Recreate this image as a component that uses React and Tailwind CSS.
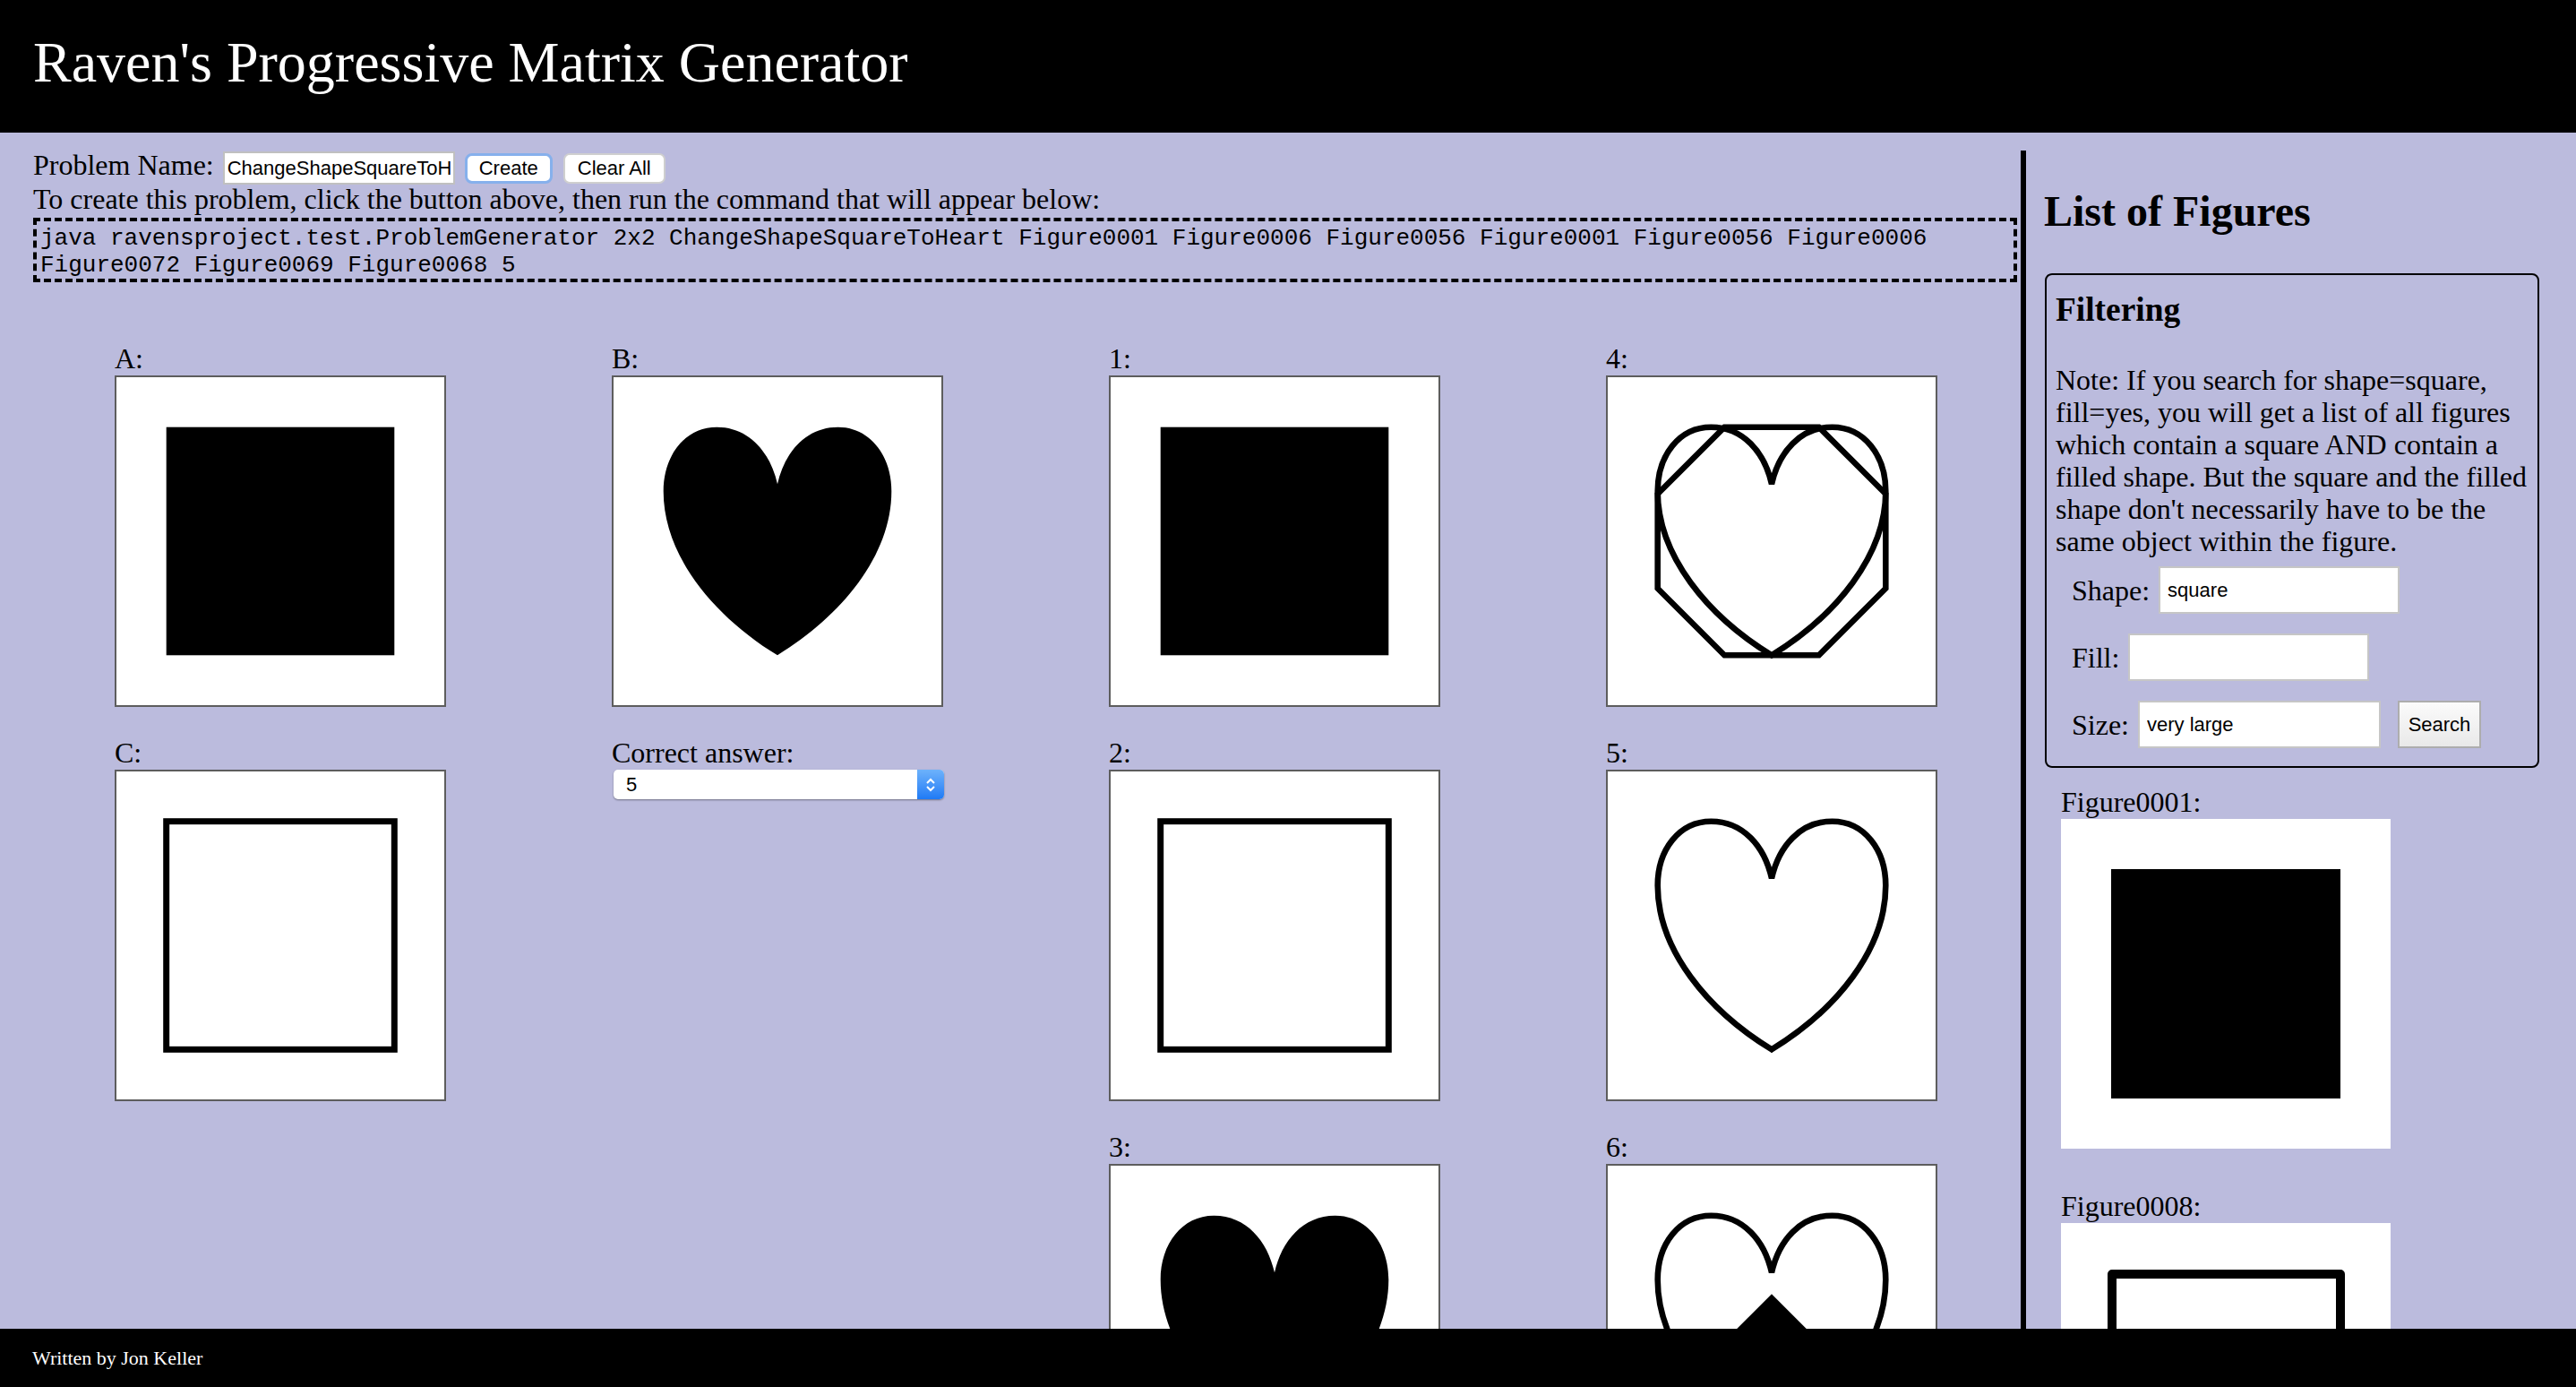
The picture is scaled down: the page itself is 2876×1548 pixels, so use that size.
import React from 'react';

const SANS = "font-['Liberation_Sans',Arial,sans-serif]";
const MONO = "font-['Liberation_Mono','Courier_New',monospace]";

// Heart outline used by several matrix cells (184x184 figure space)
const HEART =
  'M92 60C88 42 76 28 58 28C40 28 28 44 28 64C28 100 56 134 92 156C128 134 156 100 156 64C156 44 144 28 126 28C108 28 96 42 92 60Z';

function Shape({ kind }) {
  switch (kind) {
    case 'squareFilled':
      return <rect x="28" y="28" width="128" height="128" fill="black" />;
    case 'squareOutline':
      return <rect x="28" y="28" width="128" height="128" fill="none" stroke="black" strokeWidth="3.5" />;
    case 'squareThick':
      return (
        <rect x="28.5" y="28.5" width="127.5" height="127.5" fill="none" stroke="black" strokeWidth="5" strokeLinejoin="round" />
      );
    case 'heartFilled':
      return <path d={HEART} fill="black" />;
    case 'heartOutline':
      return <path d={HEART} fill="none" stroke="black" strokeWidth="3.3" />;
    case 'heartOctagon':
      return (
        <>
          <polygon
            points="65.5,28 118.5,28 156,65.5 156,118.5 118.5,156 65.5,156 28,118.5 28,65.5"
            fill="none"
            stroke="black"
            strokeWidth="3.3"
          />
          <path d={HEART} fill="none" stroke="black" strokeWidth="3.3" />
        </>
      );
    case 'heartTriangle':
      return (
        <>
          <path d={HEART} fill="none" stroke="black" strokeWidth="3.3" />
          <polygon points="92,72 52,112 132,112" fill="black" />
        </>
      );
    default:
      return null;
  }
}

function Figure({ kind }) {
  return (
    <svg viewBox="0 0 184 184" className="block h-full w-full">
      <Shape kind={kind} />
    </svg>
  );
}

const cells = [
  { label: 'A:', kind: 'squareFilled' },
  { label: 'B:', kind: 'heartFilled' },
  { label: '1:', kind: 'squareFilled' },
  { label: '4:', kind: 'heartOctagon' },
  { label: 'C:', kind: 'squareOutline' },
  { label: 'Correct answer:', select: true },
  { label: '2:', kind: 'squareOutline' },
  { label: '5:', kind: 'heartOutline' },
  { empty: true },
  { empty: true },
  { label: '3:', kind: 'heartFilled' },
  { label: '6:', kind: 'heartTriangle' },
];

const figureList = [
  { name: 'Figure0001', kind: 'squareFilled' },
  { name: 'Figure0008', kind: 'squareThick' },
];

function AnswerSelect() {
  return (
    <div className="ml-[2px] flex h-[33px] w-[369px] items-center rounded-[5px] bg-white shadow-[0_1px_2px_rgba(0,0,0,0.4)]">
      <span className={`flex-1 pl-[14px] text-[22px] leading-none ${SANS}`}>5</span>
      <div className="flex h-full w-[30px] items-center justify-center rounded-r-[5px] bg-linear-to-b from-[#6db2fb] to-[#1e7af5]">
        <svg width="14" height="22" viewBox="0 0 14 22">
          <path d="M3 9 L7 5 L11 9" fill="none" stroke="white" strokeWidth="2" />
          <path d="M3 13 L7 17 L11 13" fill="none" stroke="white" strokeWidth="2" />
        </svg>
      </div>
    </div>
  );
}

export default function App() {
  return (
    <div className="flex h-screen flex-col overflow-hidden bg-[#bbbbdd] font-['Liberation_Serif','Times_New_Roman',serif] text-[32px] text-black">
      {/* Header */}
      <header className="h-[148px] shrink-0 bg-black pl-[37px] pt-[38px]">
        <h1 className="text-[64px] font-normal leading-[64px] text-white">Raven's Progressive Matrix Generator</h1>
      </header>

      <div className="flex min-h-0 flex-1 overflow-hidden">
        {/* Problem editor */}
        <div className="w-[2256px] shrink-0 pl-[37px] pr-[4px] pt-[18px]">
          <div className="flex items-baseline leading-[37px]">
            <span>Problem Name:</span>
            <input
              readOnly
              defaultValue="ChangeShapeSquareToHeart"
              className={`ml-[10px] h-[37px] w-[259px] border-2 border-[#c0c0c0] bg-white px-[3px] text-[22px] outline-none ${SANS}`}
            />
            <button
              className={`ml-[11px] h-[34px] rounded-[8px] border-[3px] border-[#86b0ec] bg-white px-[13px] text-[22px] leading-[26px] ${SANS}`}
            >
              Create
            </button>
            <button
              className={`ml-[12px] h-[34px] rounded-[7px] border-2 border-[#cfcfcf] bg-white px-[14px] text-[22px] leading-[26px] ${SANS}`}
            >
              Clear All
            </button>
          </div>
          <p className="-mt-[2px] leading-[37px]">
            To create this problem, click the button above, then run the command that will appear below:
          </p>
          <div className={`mt-[2px] border-4 border-dashed border-black px-[4px] pt-[4px] text-[26px] leading-[30px] ${MONO}`}>
            java ravensproject.test.ProblemGenerator 2x2 ChangeShapeSquareToHeart Figure0001 Figure0006 Figure0056
            Figure0001 Figure0056 Figure0006 Figure0072 Figure0069 Figure0068 5
          </div>

          {/* Matrix + answer options */}
          <div className="ml-[91px] mt-[66px] grid grid-cols-[repeat(4,370px)] gap-x-[185px] gap-y-[32px]">
            {cells.map((c, i) =>
              c.empty ? (
                <div key={i} />
              ) : (
                <div key={i}>
                  <div className="leading-[38px]">{c.label}</div>
                  {c.select ? (
                    <AnswerSelect />
                  ) : (
                    <div className="h-[370px] w-[370px] border-2 border-[#5d5d5d] bg-white">
                      <Figure kind={c.kind} />
                    </div>
                  )}
                </div>
              )
            )}
          </div>
        </div>

        {/* List of figures */}
        <div className="mt-[20px] flex-1 border-l-[6px] border-black pl-[20px]">
          <h2 className="mt-[40px] text-[48px] font-bold leading-[55px]">List of Figures</h2>

          <div className="ml-[1px] mt-[42px] w-[552px] rounded-[8px] border-2 border-black px-[10px] pb-[20px] pt-[17px]">
            <h3 className="text-[37.4px] font-bold leading-[43px]">Filtering</h3>
            <p className="mt-[39px] leading-[36px]">
              Note: If you search for shape=square, fill=yes, you will get a list of all figures which contain a square AND
              contain a filled shape. But the square and the filled shape don't necessarily have to be the same object
              within the figure.
            </p>
            <div className="mt-[10px] flex flex-col gap-[22px] pl-[18px]">
              <div className="flex h-[53px] items-center gap-[10px]">
                <span>Shape:</span>
                <input
                  readOnly
                  defaultValue="square"
                  className={`h-[53px] w-[269px] border-2 border-[#c6c6c6] bg-white px-[8px] text-[22px] outline-none ${SANS}`}
                />
              </div>
              <div className="flex h-[53px] items-center gap-[10px]">
                <span>Fill:</span>
                <input
                  readOnly
                  defaultValue=""
                  className={`h-[53px] w-[269px] border-2 border-[#c6c6c6] bg-white px-[8px] text-[22px] outline-none ${SANS}`}
                />
              </div>
              <div className="flex h-[53px] items-center gap-[10px]">
                <span>Size:</span>
                <input
                  readOnly
                  defaultValue="very large"
                  className={`h-[53px] w-[271px] border-2 border-[#c6c6c6] bg-white px-[8px] text-[22px] outline-none ${SANS}`}
                />
                <button
                  className={`ml-[9px] h-[53px] w-[93px] border-2 border-[#adadad] bg-linear-to-b from-[#fbfbfb] to-[#e9e9e9] text-[22px] ${SANS}`}
                >
                  Search
                </button>
              </div>
            </div>
          </div>

          <div className="mt-[19px] flex flex-col gap-[45px] pl-[19px]">
            {figureList.map((f) => (
              <div key={f.name}>
                <div className="leading-[38px]">{f.name}:</div>
                <div className="h-[368px] w-[368px] bg-white">
                  <Figure kind={f.kind} />
                </div>
              </div>
            ))}
          </div>
        </div>
      </div>

      {/* Footer */}
      <footer className="h-[65px] shrink-0 bg-black pl-[36px] pt-[20px] text-[22px] leading-[25px] text-white">
        Written by Jon Keller
      </footer>
    </div>
  );
}
